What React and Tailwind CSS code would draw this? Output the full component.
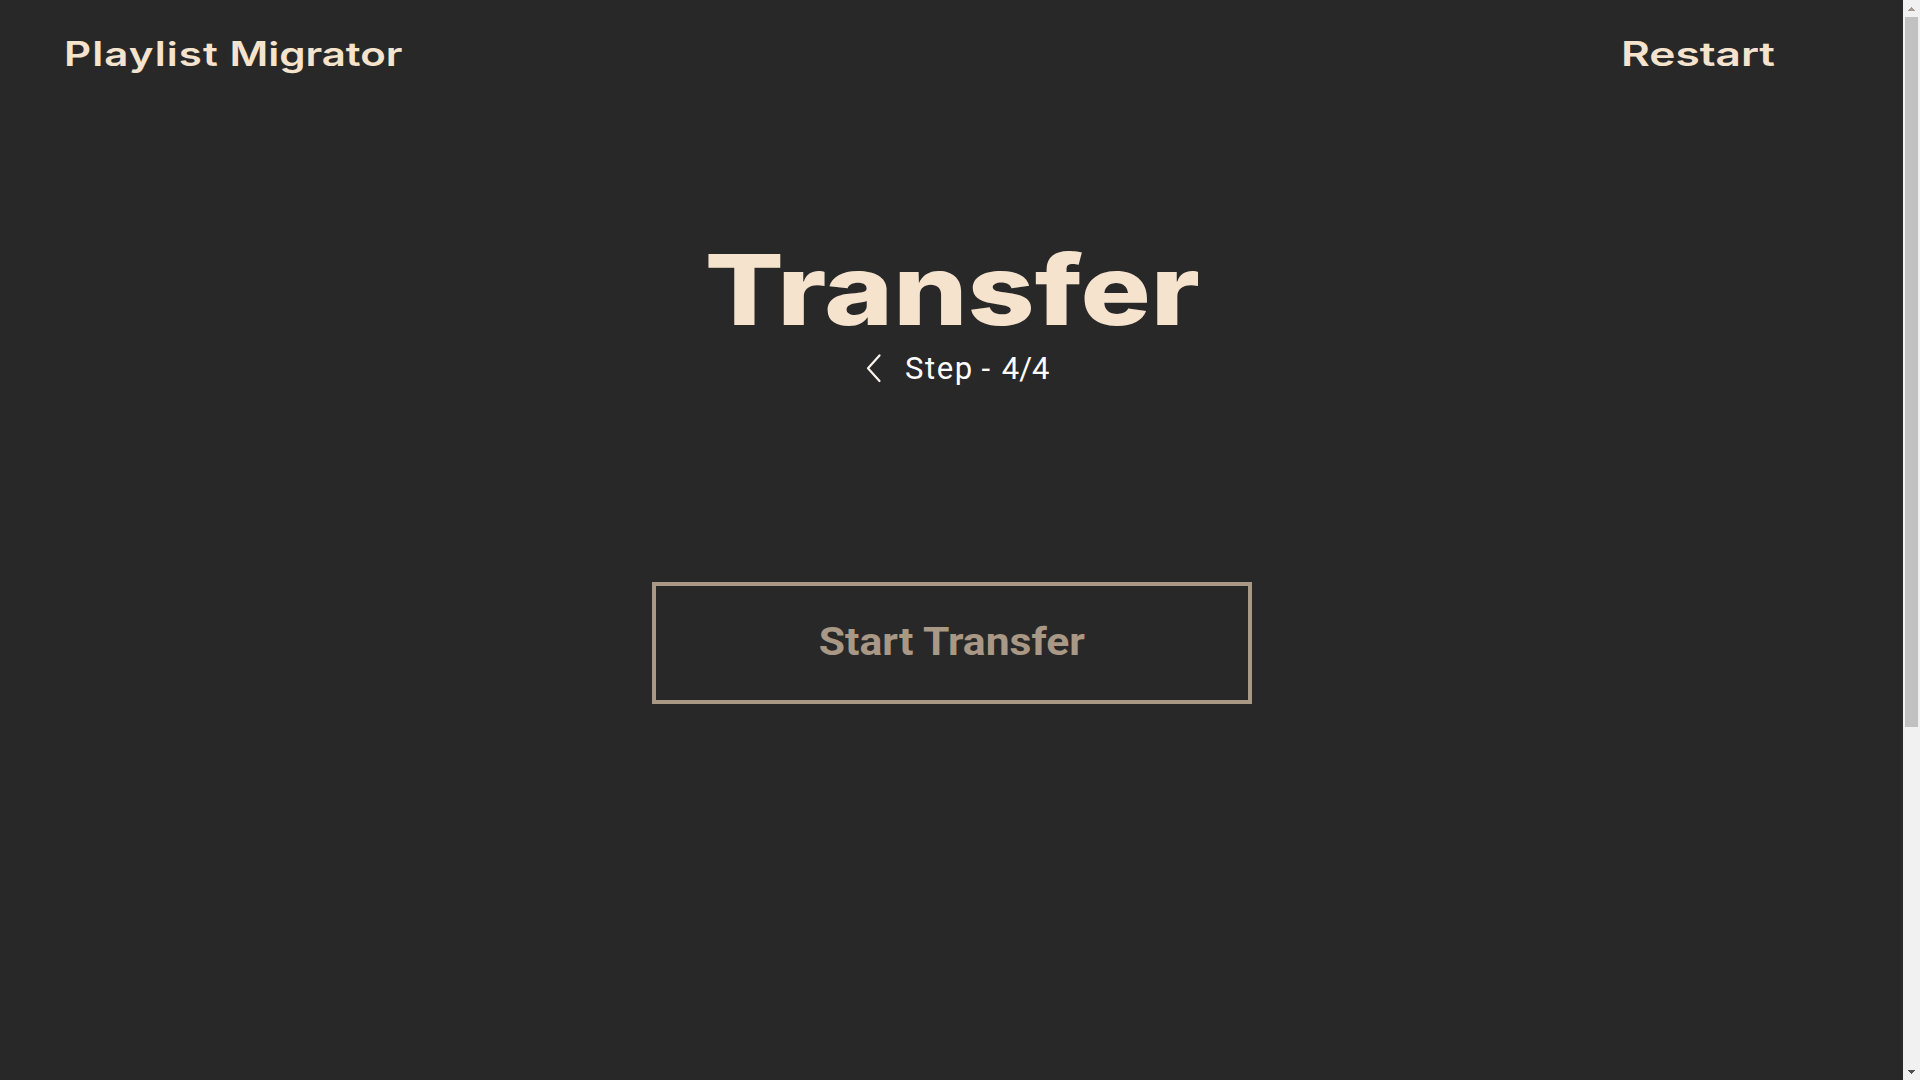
function Header() {
  return (
    <header className="flex h-[108px] items-start justify-between pt-[34px] pr-[131px] pl-[64px] font-['Inter',sans-serif] text-[33.4px] leading-[40px] font-semibold whitespace-nowrap text-[#f5e3ce]">
      <a className="w-[337px] origin-left scale-x-[1.258]">
        <span className="tracking-[0.85px]">Playlist</span> Migrator
      </a>
      <a className="w-[151.5px] origin-left scale-x-[1.325]">Restart</a>
    </header>
  );
}

function StepIndicator() {
  return (
    <div className="flex h-10 items-center">
      <button className="mr-[23px] ml-[866px] pb-[2px]" aria-label="Previous step">
        <svg className="block" width="16" height="30" viewBox="0 0 16 30" fill="none" stroke="#f8f5ee" strokeWidth="2.2" strokeLinecap="round" strokeLinejoin="round">
          <path d="M13.5 2.4 L2 15.2 L13.5 28" />
        </svg>
      </button>
      <p className="font-['Roboto',sans-serif] text-[31px] leading-[40px] whitespace-nowrap text-white">
        <span className="tracking-[1.6px]">Step</span> <span className="tracking-[4px]">-</span> 4/4
      </p>
    </div>
  );
}

function Scrollbar() {
  return (
    <aside className="flex h-full w-[17px] flex-col items-center bg-[#f1f1f1]">
      <div className="flex h-[17px] items-center justify-center pt-px">
        <svg className="block" width="7" height="4" viewBox="0 0 7 4" fill="#a39b92" shapeRendering="crispEdges">
          <path d="M3 0h1v1h1v1h1v1h1v1H0V3h1V2h1V1h1z" />
        </svg>
      </div>
      <div className="h-[710px] w-[13px] bg-[#c1c1c1]" />
      <div className="mt-auto flex h-[17px] items-center justify-center">
        <svg className="block" width="7" height="4" viewBox="0 0 7 4" fill="#505050" shapeRendering="crispEdges">
          <path d="M0 0h7v1H6v1H5v1H4v1H3V3H2V2H1V1H0z" />
        </svg>
      </div>
    </aside>
  );
}

export default function App() {
  return (
    <div className="flex h-[1080px] w-[1920px] overflow-hidden bg-[#282828]">
      <div className="flex w-[1903px] flex-col">
        <Header />
        <main className="flex flex-col pt-[123px]">
          <h1 className="self-center pl-[2px] font-['Inter',sans-serif] text-[97.6px] leading-[118px] font-extrabold text-[#f5e3ce]">
            <span className="inline-block scale-x-[1.2]">Transfer</span>
          </h1>
          <StepIndicator />
          <button className="mt-[193px] flex h-[122px] w-[600px] items-center justify-center self-center border-4 border-[#a89885] pb-[3px] font-['Roboto',sans-serif] text-[39.4px] leading-[46px] font-bold text-[#a89885]">
            <span className="scale-x-[1.083]">Start Transfer</span>
          </button>
        </main>
      </div>
      <Scrollbar />
    </div>
  );
}
